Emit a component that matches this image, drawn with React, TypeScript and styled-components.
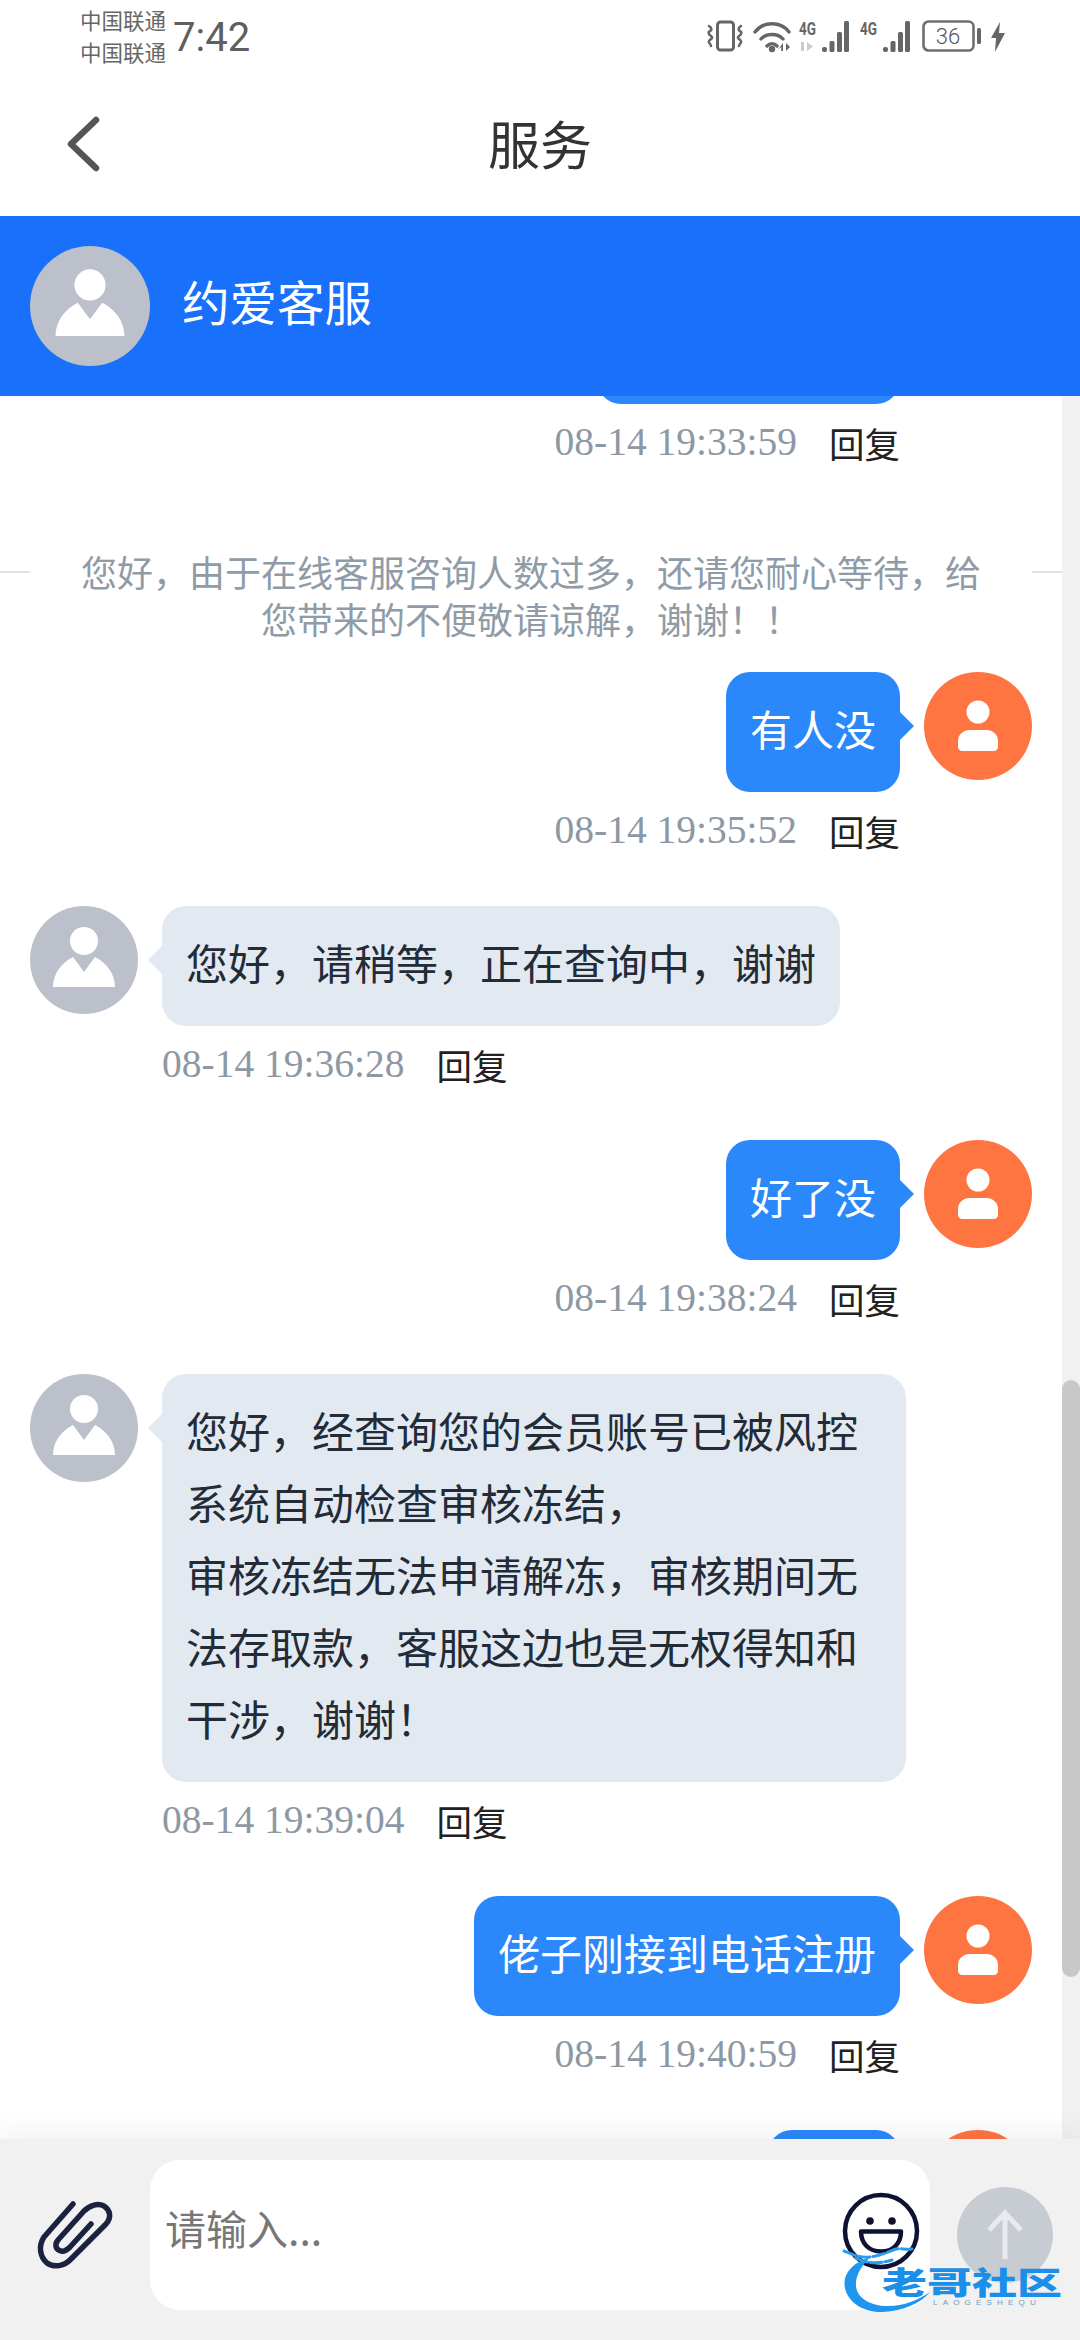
import React from 'react';
import styled, { createGlobalStyle } from 'styled-components';

const CJK = `"Noto Sans CJK SC", "Noto Sans", sans-serif`;

const GlobalStyle = createGlobalStyle`
  html, body { margin: 0; padding: 0; background: #fff; }
  body { font-family: ${CJK}; }
  * { box-sizing: border-box; }
`;

const Page = styled.div`
  width: 1080px;
  height: 2340px;
  position: relative;
  display: flex;
  flex-direction: column;
  overflow: hidden;
  background: #fff;
`;

const StatusBar = styled.div`
  height: 72px;
  flex: none;
  display: flex;
  align-items: flex-start;
  padding: 4px 75px 0 80px;
  color: #666;
`;

const Carriers = styled.div`
  display: flex;
  flex-direction: column;
  font-size: 21.5px;
  line-height: 32px;
`;

const Clock = styled.div`
  margin: 10px 0 0 7px;
  font-family: Roboto, sans-serif;
  font-size: 40px;
  line-height: 48px;
  color: #5f5f5f;
`;

const StatusIcons = styled.div`
  margin: 16px 0 0 auto;
  display: flex;
  align-items: flex-start;

  svg {
    overflow: visible;
  }
`;

const NavBar = styled.div`
  height: 144px;
  flex: none;
  display: flex;
  align-items: center;
  justify-content: center;
  position: relative;
`;

const BackIcon = styled.svg`
  position: absolute;
  left: 65px;
  top: 42px;
`;

const NavTitle = styled.div`
  font-size: 52px;
  color: #333;
  line-height: 60px;
  margin-top: -2px;
`;

const ChatHeader = styled.div`
  height: 180px;
  flex: none;
  background: #1870fb;
  display: flex;
  align-items: center;
  padding-left: 30px;
  gap: 32px;
  position: relative;
  z-index: 1;
`;

const HeaderName = styled.div`
  font-size: 47.5px;
  color: #fff;
  margin-bottom: 11px;
`;

const Avatar = styled.div<{ $size: number; $bg: string }>`
  width: ${({ $size }) => $size}px;
  height: ${({ $size }) => $size}px;
  flex: none;
  border-radius: 50%;
  background: ${({ $bg }) => $bg};
  display: flex;
  align-items: center;
  justify-content: center;
`;

const ChatBody = styled.div`
  flex: 1;
  min-height: 0;
  position: relative;
  overflow: hidden;
`;

const MessageList = styled.div`
  width: 1062px;
  margin-top: -112px;
  display: flex;
  flex-direction: column;
`;

const Row = styled.div<{ $mine?: boolean }>`
  display: flex;
  flex-direction: ${({ $mine }) => ($mine ? 'row-reverse' : 'row')};
  padding: 0 30px;
  gap: 24px;
  margin-bottom: 53px;
`;

const Column = styled.div<{ $mine?: boolean }>`
  display: flex;
  flex-direction: column;
  align-items: ${({ $mine }) => ($mine ? 'flex-end' : 'flex-start')};
`;

const Bubble = styled.div<{ $mine?: boolean; $width?: number }>`
  position: relative;
  min-height: 120px;
  padding: 20px 24px 28px;
  border-radius: 24px;
  font-size: 42px;
  line-height: 72px;
  max-width: 744px;
  white-space: pre-line;
  width: ${({ $width }) => ($width ? `${$width}px` : 'auto')};
  background: ${({ $mine }) => ($mine ? '#2a88fb' : '#e3e9f1')};
  color: ${({ $mine }) => ($mine ? '#fff' : '#222b36')};

  &::after {
    content: '';
    position: absolute;
    top: 40px;
    border-style: solid;
    border-width: 14px;
    border-color: transparent;
    ${({ $mine }) =>
      $mine
        ? 'left: 100%; border-left-color: #2a88fb; border-right-width: 0;'
        : 'right: 100%; border-right-color: #e3e9f1; border-left-width: 0;'}
  }
`;

const Meta = styled.div`
  height: 46px;
  margin-top: 15px;
  display: flex;
  align-items: center;
  gap: 32px;
`;

const Stamp = styled.span`
  font-family: "Liberation Serif", serif;
  font-size: 39.5px;
  color: #8d98a5;
`;

const Reply = styled.span`
  font-size: 35.5px;
  color: #222;
`;

const SystemRow = styled.div`
  display: flex;
  align-items: flex-start;
  margin: 30px 0 30px;
`;

const SystemLine = styled.div`
  width: 30px;
  flex: none;
  height: 2px;
  margin-top: 23px;
  background: #dfe3e8;
`;

const SystemText = styled.div`
  flex: 1;
  padding: 0 50px;
  font-size: 36px;
  line-height: 47px;
  text-align: center;
  color: #8f9ba6;
`;

const ScrollTrack = styled.div`
  position: absolute;
  top: 0;
  right: 0;
  bottom: 0;
  width: 18px;
  background: #f1f1f1;
`;

const ScrollThumb = styled.div`
  position: absolute;
  top: 984px;
  left: 0;
  width: 18px;
  height: 597px;
  border-radius: 9px;
  background: #c8c8c8;
`;

const InputBar = styled.div`
  height: 201px;
  flex: none;
  background: #f1f1f1;
  display: flex;
  align-items: flex-start;
  padding: 21px 27px 0 20px;
  position: relative;
  box-shadow: 0 -10px 24px rgba(0, 0, 0, 0.05);
`;

const ClipIcon = styled.svg`
  flex: none;
  margin-top: 20px;
`;

const InputBox = styled.div`
  width: 780px;
  height: 150px;
  background: #fff;
  border-radius: 30px;
  display: flex;
  align-items: center;
  justify-content: space-between;
  padding: 0 10px 0 15px;
`;

const Placeholder = styled.div`
  font-size: 41px;
  color: #777;
  margin-top: -16px;
`;

const SmileIcon = styled.svg`
  margin-top: -8px;
`;

const SendButton = styled.div`
  width: 96px;
  height: 96px;
  margin: 27px 0 0 27px;
  border-radius: 50%;
  background: #c6ccd2;
  display: flex;
  align-items: center;
  justify-content: center;
`;

const Watermark = styled.div`
  position: absolute;
  left: 842px;
  top: 2246px;
  width: 220px;
  height: 70px;
`;

const WatermarkName = styled.div`
  position: absolute;
  left: 40px;
  top: 10px;
  font-size: 45px;
  line-height: 50px;
  font-weight: 900;
  white-space: nowrap;
  transform: scaleY(0.68);
  color: #1a8ee8;
`;

const WatermarkLatin = styled.div`
  position: absolute;
  left: 91px;
  top: 52px;
  font-family: "Liberation Sans", sans-serif;
  font-size: 8px;
  line-height: 10px;
  letter-spacing: 5.2px;
  white-space: nowrap;
  color: #6f9cc4;
`;

const StaffIcon = ({ size }: { size: number }) => (
  <svg width={size} height={size} viewBox="0 0 108 108">
    <circle cx="54" cy="35" r="14" fill="#fff" />
    <path d="M23 81c0-13 8-24 20-30l11 15 11-15c12 6 20 17 20 30z" fill="#fff" />
  </svg>
);

const UserIcon = () => (
  <svg width="108" height="108" viewBox="0 0 108 108">
    <circle cx="54" cy="40" r="11.5" fill="#fff" />
    <path d="M34 75v-6c0-7 6-11 11-11h18c5 0 11 4 11 11v6c0 2-2 4-4 4H38c-2 0-4-2-4-4z" fill="#fff" />
  </svg>
);

const SignalIcon = ({ dim }: { dim?: boolean }) => (
  <svg width="50" height="32" viewBox="0 0 50 32" style={{ marginRight: 11 }}>
    <text x="0" y="15" fontFamily="Roboto, sans-serif" fontSize="19" fontWeight="700" fill="#666" textLength="17" lengthAdjust="spacingAndGlyphs">4G</text>
    {dim && <path d="M2 22h3v9H2zM8 22l6 4.500L8 31z" fill="#ccc" />}
    <rect x="23" y="27" width="5" height="5" rx="2" fill="#666" />
    <rect x="30.5" y="21" width="5" height="11" rx="1.5" fill="#666" />
    <rect x="38" y="12" width="5" height="20" rx="1.5" fill="#666" />
    <rect x="45" y="1" width="5" height="31" rx="1.5" fill="#666" />
  </svg>
);

const StatusGlyphs = () => (
  <StatusIcons>
    <svg width="38" height="32" viewBox="0 0 38 32" style={{ marginRight: 9 }}>
      <rect x="11.5" y="2" width="16" height="28" rx="3" fill="none" stroke="#666" strokeWidth="3" />
      <path d="M3 6c3 2 3 4 1 5s-2 3 1 5-1 3-2 5 2 3 2 5M35 6c-3 2-3 4-1 5s2 3-1 5 1 3 2 5-2 3-2 5" fill="none" stroke="#666" strokeWidth="2.6" strokeLinecap="round" />
    </svg>
    <svg width="38" height="32" viewBox="0 0 38 32" style={{ marginRight: 8 }}>
      <path d="M2 12C10 1 28 1 36 12M8 19c5-6 17-6 22 0M14 26c3-3 7-3 10 0" fill="none" stroke="#666" strokeWidth="3.4" strokeLinecap="round" />
      <circle cx="19" cy="29" r="3.2" fill="#666" />
      <path d="M30 23v8h-1.800v-4l-3 2.400zM33 23v8l4-4z" fill="#666" />
    </svg>
    <SignalIcon dim />
    <SignalIcon />
    <svg width="60" height="32" viewBox="0 0 60 32" style={{ marginLeft: 1, marginRight: 9 }}>
      <rect x="1.5" y="1.5" width="50" height="29" rx="5" fill="none" stroke="#6e6e6e" strokeWidth="2.6" />
      <text x="26" y="24" textAnchor="middle" fontFamily="Roboto, sans-serif" fontWeight="300" fontSize="22" fill="#555">36</text>
      <rect x="55" y="8" width="4" height="16" rx="1.5" fill="#666" />
    </svg>
    <svg width="14" height="32" viewBox="0 0 14 32">
      <path d="M9 2L0 18h5L4 32l10-19H8z" fill="#666" />
    </svg>
  </StatusIcons>
);

const PaperclipIcon = () => (
  <ClipIcon width="130" height="100" viewBox="0 0 130 100">
    <path
      d="M53 24L24 57C18 66 20 77 27 83C34 88 44 86 50 80L86 44C92 37 90 30 84 26C78 23 70 25 64 31L38 60C34 65 36 70 41 71C44 72 47 70 50 67L71 44"
      fill="none"
      stroke="#1b2240"
      strokeWidth="5.5"
      strokeLinecap="round"
      strokeLinejoin="round"
    />
  </ClipIcon>
);

const EmojiIcon = () => (
  <SmileIcon width="78" height="78" viewBox="0 0 78 78">
    <circle cx="39" cy="39" r="36" fill="#fff" stroke="#0d1330" strokeWidth="4.5" />
    <circle cx="28" cy="29" r="3.8" fill="#0d1330" />
    <circle cx="50" cy="29" r="3.8" fill="#0d1330" />
    <path d="M19 39.5h40c0 12-8 20-20 20S19 51.500 19 39.500z" fill="#fff" stroke="#0d1330" strokeWidth="4.5" strokeLinejoin="round" />
  </SmileIcon>
);

const ArrowUpIcon = () => (
  <svg width="40" height="52" viewBox="0 0 40 52">
    <path d="M20 50V4M4 21L20 4l16 17" fill="none" stroke="#e8eaee" strokeWidth="5" />
  </svg>
);

type Message =
  | { kind: 'system'; text: string }
  | { kind: 'chat'; mine: boolean; text?: string; stamp?: string; width?: number };

const messages: Message[] = [
  { kind: 'chat', mine: true, width: 303, stamp: '08-14 19:33:59' },
  { kind: 'system', text: '您好，由于在线客服咨询人数过多，还请您耐心等待，给您带来的不便敬请谅解，谢谢！！' },
  { kind: 'chat', mine: true, text: '有人没', stamp: '08-14 19:35:52' },
  { kind: 'chat', mine: false, text: '您好，请稍等，正在查询中，谢谢', stamp: '08-14 19:36:28' },
  { kind: 'chat', mine: true, text: '好了没', stamp: '08-14 19:38:24' },
  {
    kind: 'chat',
    mine: false,
    text: '您好，经查询您的会员账号已被风控系统自动检查审核冻结，\n审核冻结无法申请解冻，审核期间无法存取款，客服这边也是无权得知和干涉，谢谢！',
    stamp: '08-14 19:39:04',
  },
  { kind: 'chat', mine: true, text: '佬子刚接到电话注册', stamp: '08-14 19:40:59' },
  { kind: 'chat', mine: true, width: 132 },
];

export default function App() {
  return (
    <Page>
      <GlobalStyle />
      <StatusBar>
        <Carriers>
          <span>中国联通</span>
          <span>中国联通</span>
        </Carriers>
        <Clock>7:42</Clock>
        <StatusGlyphs />
      </StatusBar>
      <NavBar>
        <BackIcon width="38" height="60" viewBox="0 0 38 60">
          <path d="M31 6L6 30l25 24" fill="none" stroke="#555" strokeWidth="6.5" strokeLinecap="round" strokeLinejoin="round" />
        </BackIcon>
        <NavTitle>服务</NavTitle>
      </NavBar>
      <ChatHeader>
        <Avatar $size={120} $bg="#bcc0ca">
          <StaffIcon size={120} />
        </Avatar>
        <HeaderName>约爱客服</HeaderName>
      </ChatHeader>
      <ChatBody>
        <MessageList>
          {messages.map((m, i) =>
            m.kind === 'system' ? (
              <SystemRow key={i}>
                <SystemLine />
                <SystemText>{m.text}</SystemText>
                <SystemLine />
              </SystemRow>
            ) : (
              <Row key={i} $mine={m.mine}>
                <Avatar $size={108} $bg={m.mine ? '#ff7542' : '#bcc0ca'}>
                  {m.mine ? <UserIcon /> : <StaffIcon size={108} />}
                </Avatar>
                <Column $mine={m.mine}>
                  <Bubble $mine={m.mine} $width={m.width}>
                    {m.text}
                  </Bubble>
                  {m.stamp && (
                    <Meta>
                      <Stamp>{m.stamp}</Stamp>
                      <Reply>回复</Reply>
                    </Meta>
                  )}
                </Column>
              </Row>
            ),
          )}
        </MessageList>
        <ScrollTrack>
          <ScrollThumb />
        </ScrollTrack>
      </ChatBody>
      <InputBar>
        <PaperclipIcon />
        <InputBox>
          <Placeholder>请输入...</Placeholder>
          <EmojiIcon />
        </InputBox>
        <SendButton>
          <ArrowUpIcon />
        </SendButton>
      </InputBar>
      <Watermark>
        <svg width="92" height="70" viewBox="0 0 92 70">
          <path d="M28 11C10 17 0 28 3 42c3 15 20 25 38 24 20-1 38-9 47-20-12 8-26 14-42 14C28 60 15 52 14 40c-1-11 6-20 14-29z" fill="#1f96ee" />
          <path d="M2 5c10 4 16 7 26 6s18-5 26-8c4-1 10 1 16 0M14 12c10 6 24 6 36 2" fill="none" stroke="#2a9cf0" strokeWidth="3" strokeLinecap="round" strokeDasharray="12 3" />
        </svg>
        <WatermarkName>老哥社区</WatermarkName>
        <WatermarkLatin>LAOGESHEQU</WatermarkLatin>
      </Watermark>
    </Page>
  );
}
